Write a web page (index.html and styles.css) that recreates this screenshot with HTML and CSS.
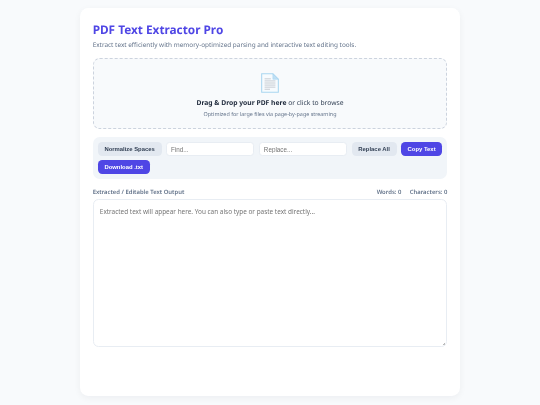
FILE: index.html
```html
<!DOCTYPE html>
<html lang="en">
<head>
<meta charset="utf-8">
<title>PDF Text Extractor Pro</title>
<link rel="stylesheet" href="styles.css">
</head>
<body>
<main class="card">
  <h1 class="title">PDF Text Extractor Pro</h1>
  <p class="subtitle">Extract text efficiently with memory-optimized parsing and interactive text editing tools.</p>
  <section class="drop">
    <svg class="doc" width="20" height="20" viewBox="0 0 48 48" aria-hidden="true">
      <path d="M4 2H31L44 15V46H4Z" fill="#f7fbfe" stroke="#a9d6f0" stroke-width="2.5"/>
      <path d="M31 2V15H44Z" fill="#bfe0f5" stroke="#a9d6f0" stroke-width="1.5"/>
      <path d="M11 14H26M11 19H37M11 24H37M11 29H37M11 34H37M11 39H24" stroke="#c3c8cf" stroke-width="2.2"/>
    </svg>
    <p class="drop-main"><strong>Drag &amp; Drop your PDF here</strong> or click to browse</p>
    <p class="drop-sub">Optimized for large files via page-by-page streaming</p>
  </section>
  <section class="toolbar">
    <button class="btn btn-grey">Normalize Spaces</button>
    <input class="field" type="text" placeholder="Find...">
    <input class="field" type="text" placeholder="Replace...">
    <button class="btn btn-grey">Replace All</button>
    <button class="btn btn-primary">Copy Text</button>
    <button class="btn btn-primary">Download .txt</button>
  </section>
  <div class="meta">
    <span>Extracted / Editable Text Output</span>
    <div class="stats"><span>Words: 0</span><span>Characters: 0</span></div>
  </div>
  <textarea class="output" placeholder="Extracted text will appear here. You can also type or paste text directly..."></textarea>
</main>
</body>
</html>
```
FILE: styles.css
```css
* { box-sizing: border-box; }
html, body { margin: 0; height: 100%; }
body {
  background: #f8fafc;
  font-family: "Noto Sans", sans-serif;
  color: #1e293b;
  padding: 8.4px 80px;
  overflow: hidden;
  text-rendering: geometricPrecision;
}
.card {
  display: flex;
  flex-direction: column;
  height: 388px;
  background: #fff;
  border-radius: 8.4px;
  padding: 13.5px 12.66px 12.66px;
  box-shadow: 0 2px 7px rgba(15, 23, 42, 0.05);
  filter: blur(0.25px);
}
.title {
  margin: 0;
  font-size: 11.8px;
  line-height: 16px;
  font-weight: 700;
  color: #4f46e5;
}
.subtitle {
  margin: 2.6px 0 0;
  font-size: 6.41px;
  line-height: 9.3px;
  color: #64748b;
}
.drop {
  margin-top: 8.4px;
  height: 70.9px;
  flex: none;
  display: flex;
  flex-direction: column;
  align-items: center;
  background: #f8fafc;
  border: 1px dashed #ccd3de;
  border-radius: 6.7px;
  padding-top: 13.5px;
}
.doc { display: block; }
.drop-main {
  margin: 5.8px 0 0;
  font-size: 6.75px;
  line-height: 10px;
  color: #334155;
}
.drop-main strong { color: #1e293b; font-weight: 700; }
.drop-sub {
  margin: 2.5px 0 0;
  font-size: 5.4px;
  line-height: 7.6px;
  color: #64748b;
}
.toolbar {
  margin-top: 8.4px;
  flex: none;
  display: flex;
  flex-wrap: wrap;
  gap: 4.2px;
  background: #f1f5f9;
  border-radius: 6.7px;
  padding: 5px;
}
.btn {
  height: 13.5px;
  border: 0;
  border-radius: 4.2px;
  padding: 0 6.75px;
  font-family: "Liberation Sans", sans-serif;
  font-size: 5.9px;
  font-weight: 700;
}
.btn-grey { background: #e2e8f0; color: #334155; }
.btn-primary { background: #4f46e5; color: #fff; }
.field {
  flex: 1 1 84px;
  min-width: 0;
  height: 13.5px;
  border: 1px solid #e8edf3;
  border-radius: 3.4px;
  background: #fff;
  padding: 0 4.2px;
  font-family: "Liberation Sans", sans-serif;
  font-size: 6.3px;
}
.field::placeholder { color: #757575; }
.meta {
  margin-top: 9.2px;
  height: 8.4px;
  flex: none;
  display: flex;
  justify-content: space-between;
  align-items: center;
  font-size: 5.9px;
  font-weight: 600;
  color: #64748b;
}
.stats { display: flex; gap: 8.4px; }
.output {
  margin-top: 3px;
  height: 148px;
  flex: none;
  width: 100%;
  display: block;
  border: 1px solid #e8edf3;
  border-radius: 5.5px;
  padding: 7.2px 6.2px;
  font-family: "Noto Sans", sans-serif;
  font-size: 6.41px;
  line-height: 9.3px;
  resize: none;
  background: linear-gradient(135deg, transparent 55%, #b8b8b8 55%) no-repeat right 1px bottom 1px / 3px 3px, #fff;
}
.output::placeholder { color: #757575; }
```
